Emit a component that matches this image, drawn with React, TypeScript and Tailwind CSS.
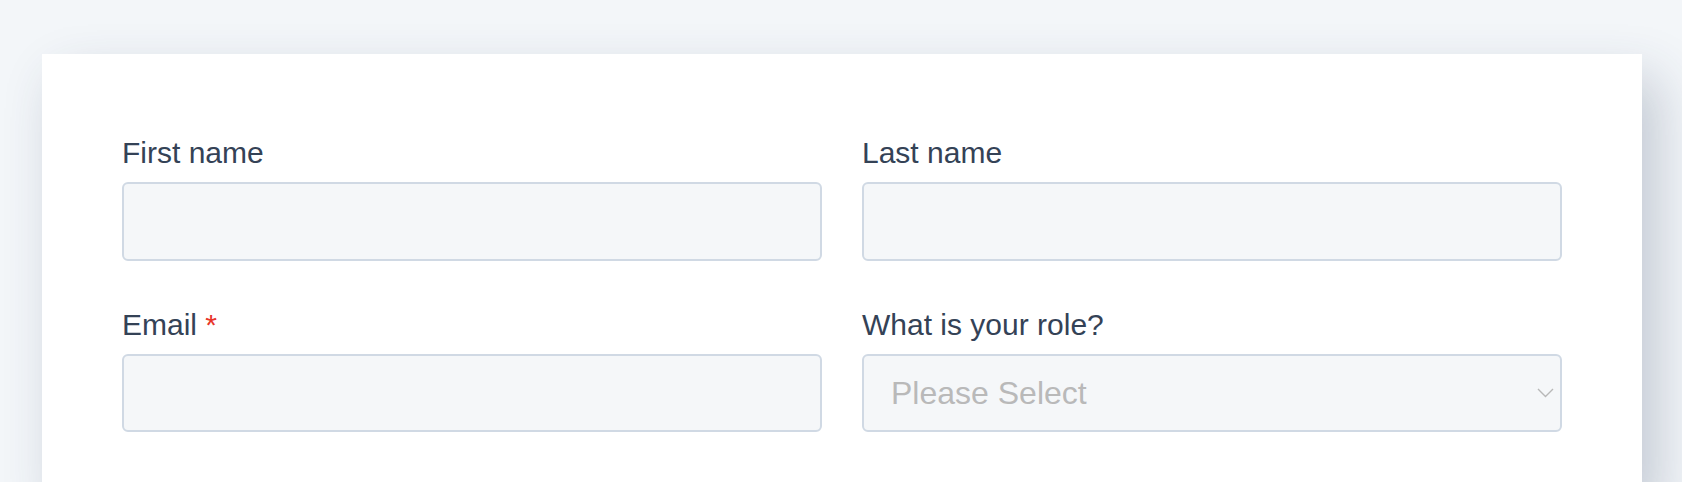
import React from 'react'

const font = { fontFamily: '"Liberation Sans", Arial, Helvetica, sans-serif' }

function Field({ label, required, children }: { label: string; required?: boolean; children: React.ReactNode }) {
  return (
    <div className="flex flex-col">
      <label className="block text-[30px] leading-[36px] text-[#344256] mb-[11px]">
        {label}
        {required && <span className="text-[#e8352a]"> *</span>}
      </label>
      {children}
    </div>
  )
}

export default function App() {
  return (
    <div className="h-[482px] overflow-hidden bg-[#f3f6f9] pt-[54px] pl-[42px] pr-[40px]" style={font}>
      <div className="bg-white h-[440px] w-[1600px] shadow-[16px_24px_50px_rgba(40,60,90,0.24)] px-[80px] pt-[81px]">
        <div className="grid grid-cols-2 gap-x-[40px] gap-y-[46px]">
          <Field label="First name">
            <input className="h-[79px] w-full rounded-[6px] border-2 border-[#d0d9e4] bg-[#f5f7f9] px-[28px] text-[31px] outline-none" />
          </Field>
          <Field label="Last name">
            <input className="h-[79px] w-full rounded-[6px] border-2 border-[#d0d9e4] bg-[#f5f7f9] px-[28px] text-[31px] outline-none" />
          </Field>
          <Field label="Email" required>
            <input className="h-[78px] w-full rounded-[6px] border-2 border-[#d0d9e4] bg-[#f5f7f9] px-[28px] text-[31px] outline-none" />
          </Field>
          <Field label="What is your role?">
            <div className="relative">
              <select
                defaultValue=""
                className="h-[78px] w-full appearance-none rounded-[6px] border-2 border-[#d0d9e4] bg-[#f5f7f9] pl-[27px] pr-[40px] text-[32px] text-[#b9b9b9] outline-none"
                style={font}
              >
                <option value="" disabled>Please Select</option>
                <option value="dev">Developer</option>
                <option value="design">Designer</option>
                <option value="pm">Product Manager</option>
              </select>
              <svg
                className="pointer-events-none absolute right-[8px] top-[34px]"
                width="17"
                height="10"
                viewBox="0 0 17 10"
                fill="none"
              >
                <path d="M1 1l7.5 7.5L16 1" stroke="#b8b8b8" strokeWidth="1.4" />
              </svg>
            </div>
          </Field>
        </div>
      </div>
    </div>
  )
}
